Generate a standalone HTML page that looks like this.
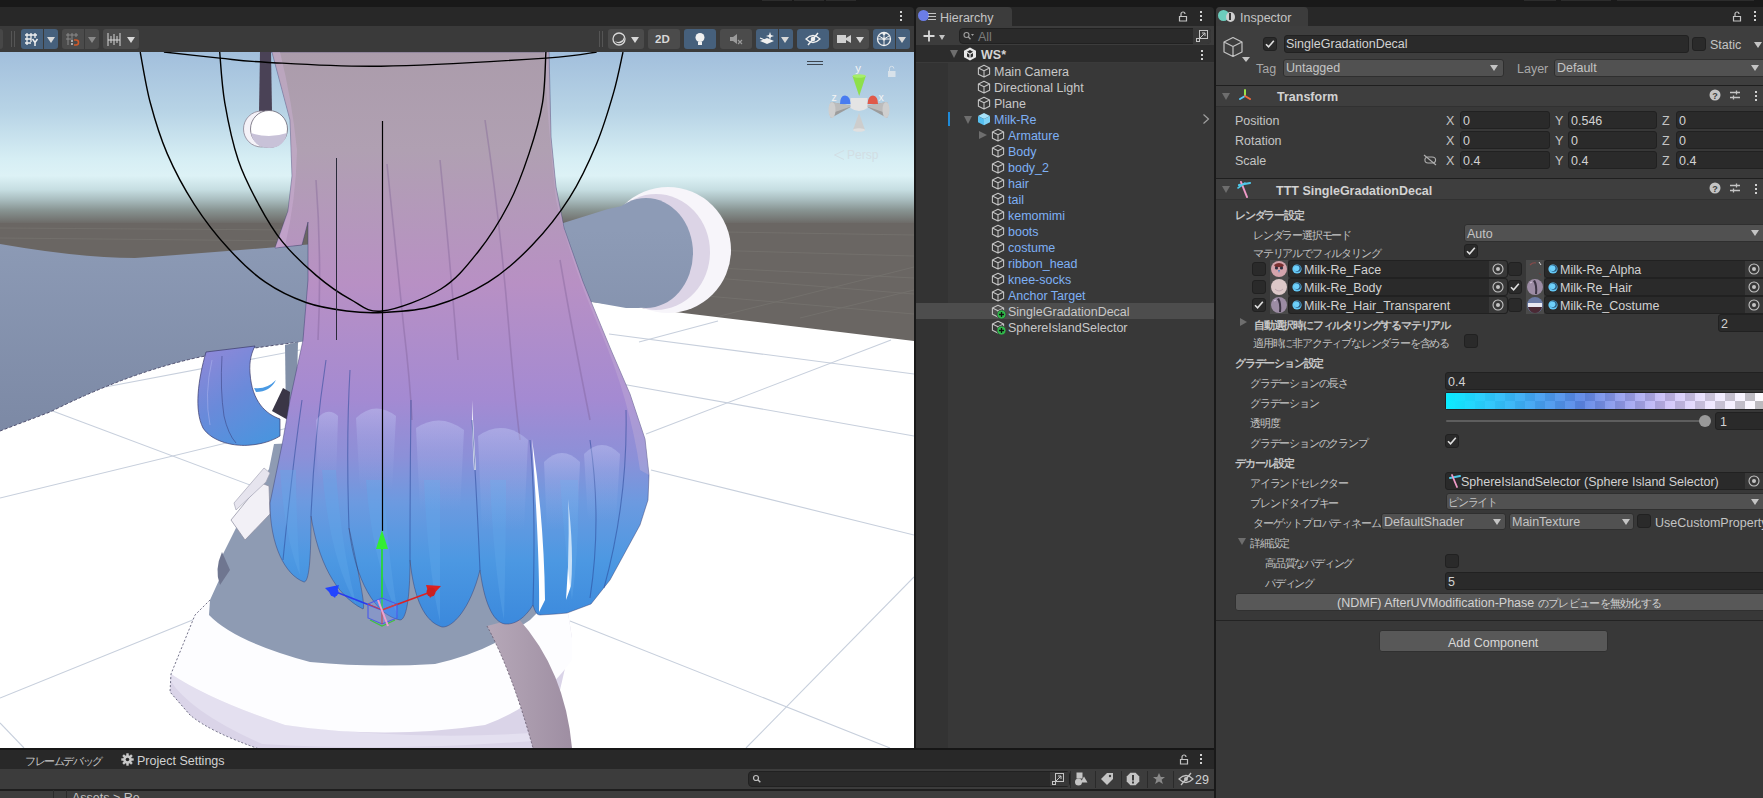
<!DOCTYPE html>
<html><head><meta charset="utf-8">
<style>
*{box-sizing:border-box;margin:0;padding:0}
html,body{width:1763px;height:798px;overflow:hidden;background:#191919;font-family:"Liberation Sans",sans-serif;font-size:12.5px;color:#c4c4c4}
.a{position:absolute}
.t{position:absolute;white-space:nowrap;line-height:16px;padding-top:1px}
.b{font-weight:bold}
.fld{position:absolute;background:#2a2a2a;border:1px solid #212121;border-radius:3px}
.dd{position:absolute;background:#515151;border:1px solid #2f2f2f;border-radius:3px}
.btn{position:absolute;background:#585858;border:1px solid #303030;border-radius:3px}
.cb{position:absolute;width:14px;height:14px;background:#2a2a2a;border:1px solid #212121;border-radius:3px}
.tri{position:absolute;width:0;height:0;border-left:4.5px solid transparent;border-right:4.5px solid transparent;border-top:6px solid #c4c4c4}
.trid{position:absolute;width:0;height:0;border-left:5px solid transparent;border-right:5px solid transparent;border-top:7px solid #6e6e6e}
.trir{position:absolute;width:0;height:0;border-top:5px solid transparent;border-bottom:5px solid transparent;border-left:7px solid #6e6e6e}
.blue{color:#7eb0f5}
.jp{font-size:10.6px;letter-spacing:-1.2px}
</style></head><body>

<!-- ===== SCENE PANEL ===== -->
<div class="a" style="left:0;top:7px;width:914px;height:19px;background:#282828;border-radius:0 4px 0 0"></div>
<div class="a" style="left:900px;top:11px;width:2px;height:2px;background:#d0d0d0;box-shadow:0 4px 0 #d0d0d0,0 8px 0 #d0d0d0"></div>
<div class="a" style="left:0;top:26px;width:914px;height:26px;background:#3a3a3a"></div>

<!-- scene toolbar -->
<div class="a" style="left:0;top:29px;width:3px;height:20px;background:#474747;border-radius:0 3px 3px 0"></div>
<div class="a" style="left:11px;top:31px;width:1px;height:16px;background:#555555"></div>
<div class="a" style="left:14px;top:31px;width:1px;height:16px;background:#555555"></div>
<div class="a" style="left:21px;top:29px;width:37px;height:20px;background:#46607c;border-radius:3px"></div>
<div class="a" style="left:43px;top:29px;width:1px;height:20px;background:#3a3a3a"></div>
<svg class="a" style="left:24px;top:31px" width="16" height="16" viewBox="0 0 16 16"><g stroke="#f0f0f0" stroke-width="1.3" fill="none"><path d="M3,2v12M7,2v9M11,2v5M1,4h12M1,8h6M1,12h6"/><path d="M8.5,8l2.5,3.5l2.5,-3.5M11,11.5v3.5" stroke-width="1.5"/></g></svg>
<div class="tri" style="left:47px;top:37px;border-top-color:#d8d8d8"></div>
<div class="a" style="left:62px;top:29px;width:37px;height:20px;background:#4b4b4b;border-radius:3px"></div>
<div class="a" style="left:84px;top:29px;width:1px;height:20px;background:#3a3a3a"></div>
<svg class="a" style="left:65px;top:31px" width="16" height="16" viewBox="0 0 16 16"><g stroke="#8a8a8a" stroke-width="1" fill="none"><path d="M3,2v12M7,2v7M11,2v4M1,4h12M1,8h5"/></g><path d="M9,9 h2 a2.5,2.5 0 0 1 0,5 h-2" stroke="#d05a2a" stroke-width="1.6" fill="none"/><rect x="6" y="9" width="2" height="2" fill="#aaa"/><rect x="6" y="12" width="2" height="2" fill="#aaa"/></svg>
<div class="tri" style="left:88px;top:37px;border-top-color:#8a8a8a"></div>
<div class="a" style="left:103px;top:29px;width:36px;height:20px;background:#4b4b4b;border-radius:3px"></div>
<svg class="a" style="left:106px;top:31px" width="16" height="16" viewBox="0 0 16 16"><g stroke="#d8d8d8" stroke-width="1" fill="none"><path d="M2,2v13M14,2v13M5,5v7M8,3v11M11,5v7M2,9h12"/></g></svg>
<div class="tri" style="left:127px;top:37px;border-top-color:#d8d8d8"></div>

<div class="a" style="left:599px;top:31px;width:1px;height:16px;background:#555555"></div>
<div class="a" style="left:602px;top:31px;width:1px;height:16px;background:#555555"></div>
<div class="a" style="left:608px;top:29px;width:36px;height:20px;background:#4b4b4b;border-radius:3px"></div>
<svg class="a" style="left:611px;top:31px" width="16" height="16" viewBox="0 0 16 16"><circle cx="8" cy="8" r="6" stroke="#d8d8d8" stroke-width="1.3" fill="none"/><path d="M4,10 a5,5 0 0 0 9,-4 a6,6 0 0 1 -9,4z" fill="#d8d8d8"/></svg>
<div class="tri" style="left:631px;top:37px;border-top-color:#d8d8d8"></div>
<div class="a" style="left:648px;top:29px;width:32px;height:20px;background:#4b4b4b;border-radius:3px"></div>
<div class="t b" style="left:655px;top:30px;font-size:11.5px;color:#d8d8d8">2D</div>
<div class="a" style="left:684px;top:29px;width:32px;height:20px;background:#46607c;border-radius:3px"></div>
<svg class="a" style="left:692px;top:31px" width="16" height="16" viewBox="0 0 16 16"><circle cx="8" cy="6.5" r="4.5" fill="#f0f0f0"/><rect x="6" y="11" width="4" height="3" fill="#f0f0f0"/></svg>
<div class="a" style="left:720px;top:29px;width:32px;height:20px;background:#4b4b4b;border-radius:3px"></div>
<svg class="a" style="left:728px;top:31px" width="16" height="16" viewBox="0 0 16 16"><path d="M2,6h3l4,-3v10l-4,-3h-3z" fill="#9a9a9a"/><path d="M10,9l4,4M14,9l-4,4" stroke="#9a9a9a" stroke-width="1.2"/></svg>
<div class="a" style="left:756px;top:29px;width:37px;height:20px;background:#46607c;border-radius:3px"></div>
<div class="a" style="left:778px;top:29px;width:1px;height:20px;background:#3a3a3a"></div>
<svg class="a" style="left:759px;top:31px" width="16" height="16" viewBox="0 0 16 16"><path d="M1,10l7,-3l7,3l-7,3z" fill="#f0f0f0"/><path d="M1,7l7,3l3,-1" stroke="#f0f0f0" stroke-width="1.2" fill="none"/><path d="M11,1l1,3l3,1l-3,1l-1,3l-1,-3l-3,-1l3,-1z" fill="#f0f0f0"/></svg>
<div class="tri" style="left:781px;top:37px;border-top-color:#d8d8d8"></div>
<div class="a" style="left:797px;top:29px;width:32px;height:20px;background:#46607c;border-radius:3px"></div>
<svg class="a" style="left:805px;top:31px" width="16" height="16" viewBox="0 0 16 16"><path d="M1,8q7,-7 14,0q-7,7 -14,0z" stroke="#f0f0f0" stroke-width="1.3" fill="none"/><circle cx="8" cy="8" r="2.3" fill="#f0f0f0"/><path d="M3,14l10,-12" stroke="#f0f0f0" stroke-width="1.4"/></svg>
<div class="a" style="left:833px;top:29px;width:36px;height:20px;background:#4b4b4b;border-radius:3px"></div>
<svg class="a" style="left:836px;top:31px" width="16" height="16" viewBox="0 0 16 16"><rect x="1" y="4" width="9" height="8" fill="#d0d0d0"/><path d="M10,7l5,-3v8l-5,-3z" fill="#d0d0d0"/></svg>
<div class="tri" style="left:856px;top:37px;border-top-color:#d8d8d8"></div>
<div class="a" style="left:873px;top:29px;width:37px;height:20px;background:#46607c;border-radius:3px"></div>
<div class="a" style="left:895px;top:29px;width:1px;height:20px;background:#3a3a3a"></div>
<svg class="a" style="left:876px;top:31px" width="16" height="16" viewBox="0 0 16 16"><circle cx="8" cy="8" r="6.5" stroke="#f0f0f0" stroke-width="1.3" fill="none"/><path d="M2,8h12M8,2v12M3,5l5,3l5,-3" stroke="#f0f0f0" stroke-width="1" fill="none"/><circle cx="8" cy="2.5" r="1.5" fill="#f0f0f0"/><circle cx="8" cy="8" r="1.5" fill="#f0f0f0"/></svg>
<div class="tri" style="left:898px;top:37px;border-top-color:#d8d8d8"></div>
<div id="scene" class="a" style="left:0;top:52px;width:914px;height:696px;overflow:hidden;background:#fff"><svg width="914" height="696" viewBox="0 52 914 696" style="position:absolute;left:0;top:0">
<defs>
<linearGradient id="sky" x1="0" y1="52" x2="0" y2="224" gradientUnits="userSpaceOnUse">
<stop offset="0" stop-color="#a2bfdc"/>
<stop offset="0.35" stop-color="#b8d4e6"/>
<stop offset="0.62" stop-color="#d6eef4"/>
<stop offset="0.72" stop-color="#ddf2f6"/>
<stop offset="0.8" stop-color="#c6dee2"/>
<stop offset="0.86" stop-color="#a8bcbe"/>
<stop offset="0.92" stop-color="#889492"/>
<stop offset="1" stop-color="#6b6865"/>
</linearGradient>
<linearGradient id="hairg" x1="0" y1="52" x2="0" y2="630" gradientUnits="userSpaceOnUse">
<stop offset="0" stop-color="#ab9cab"/>
<stop offset="0.17" stop-color="#b0a0b2"/>
<stop offset="0.4" stop-color="#b890c4"/>
<stop offset="0.6" stop-color="#a48ad2"/>
<stop offset="0.7" stop-color="#8c90d8"/>
<stop offset="0.78" stop-color="#6c9ae0"/>
<stop offset="0.88" stop-color="#4c98e2"/>
<stop offset="1" stop-color="#3a88dc"/>
</linearGradient>
<linearGradient id="armg" x1="0" y1="230" x2="0" y2="430" gradientUnits="userSpaceOnUse">
<stop offset="0" stop-color="#8d9bb6"/>
<stop offset="1" stop-color="#7c89a5"/>
</linearGradient>
<linearGradient id="rimg" x1="0" y1="600" x2="0" y2="750" gradientUnits="userSpaceOnUse">
<stop offset="0" stop-color="#ffffff"/>
<stop offset="0.55" stop-color="#f8f7fc"/>
<stop offset="1" stop-color="#dcd6ea"/>
</linearGradient>
<linearGradient id="tailg" x1="0" y1="0" x2="1" y2="0">
<stop offset="0" stop-color="#b6a8b8"/>
<stop offset="1" stop-color="#9e8ea2"/>
</linearGradient>
<linearGradient id="lockg" x1="200" y1="350" x2="260" y2="446" gradientUnits="userSpaceOnUse">
<stop offset="0" stop-color="#9088d8"/>
<stop offset="0.5" stop-color="#6a8ada"/>
<stop offset="1" stop-color="#4a94de"/>
</linearGradient>
<linearGradient id="hlg" x1="0" y1="0" x2="0" y2="1">
<stop offset="0" stop-color="#c4ccf6" stop-opacity="0.42"/>
<stop offset="0.35" stop-color="#b8c4f4" stop-opacity="0.22"/>
<stop offset="1" stop-color="#a8c0f0" stop-opacity="0"/>
</linearGradient>
</defs>
<!-- sky + ground -->
<rect x="0" y="52" width="914" height="172" fill="url(#sky)"/>
<rect x="0" y="223" width="914" height="525" fill="#6a6663"/>
<g stroke="#73706c" stroke-width="1" fill="none">
<path d="M600,230 L914,235"/><path d="M600,247 L914,256"/><path d="M600,262 L914,278"/><path d="M640,272 L914,294"/><path d="M660,292 L914,314"/>
<path d="M720,316 L914,267"/><path d="M800,318 L914,290"/><path d="M0,228 L300,230"/><path d="M0,238 L300,241"/>
</g>
<!-- floor -->
<path d="M0,330 L592,302 L914,341 L914,748 L0,748 Z" fill="#ffffff"/>
<g stroke="#c7cfdc" stroke-width="1.1" fill="none">
<path d="M609,334 L914,374"/><path d="M616,383 L914,436"/>
<path d="M639,342 L718,321"/><path d="M646,434 L891,340"/>
<path d="M651,470 L914,535"/><path d="M570,621 L890,748"/><path d="M746,748 L914,577"/>
<path d="M50,410 L330,515"/><path d="M100,388 L300,350"/><path d="M0,498 L300,425"/>
<path d="M0,698 L200,617"/><path d="M0,723 L24,748"/>
</g>
<!-- arm -->
<path d="M0,244 Q80,258 135,258 Q220,252 302,245 L560,224 L608,209 L650,200 L650,308 L626,308 L592,302 L300,342 Q250,348 200,357 Q130,372 50,412 L0,431 Z" fill="url(#armg)"/>
<path d="M0,431 L50,412 Q130,372 200,357 Q250,348 300,342" fill="none" stroke="#505070" stroke-width="1" stroke-dasharray="3,2"/>
<!-- cuff -->
<ellipse cx="668" cy="250" rx="63" ry="63" fill="#f7f5fa"/>
<ellipse cx="656" cy="252" rx="54" ry="58" fill="#dcd4e6"/>
<ellipse cx="646" cy="253" rx="47" ry="55" fill="url(#armg)"/>
<!-- skirt rim -->
<path d="M210,600 L195,615 L171,674 L170,692 L190,715 Q210,732 262,750 L545,750 L560,690 L572,638 L566,600 Z" fill="#dad4e8"/>
<path d="M170,680 Q190,712 262,744 Q400,752 545,740 L545,732 Q420,742 285,725 Q210,700 171,674 Z" fill="#e4e0f0"/>
<path d="M210,600 L195,615 L171,674 Q210,700 285,725 Q385,740 485,725 Q540,705 572,660 L572,638 L566,600 Z" fill="#fdfdff"/>
<path d="M210,600 L195,615 L171,674 L170,692 L190,715 Q210,732 262,750" fill="none" stroke="#50506a" stroke-width="0.8" stroke-dasharray="2,2"/>
<!-- skirt -->
<path d="M274,444 L269,469 L240,520 L222,556 L220,578 L210,600 L209,615 Q235,642 310,662 Q372,668 435,664 Q470,656 497,642 L530,620 L550,600 L600,560 L600,430 Z" fill="#8e9bb3"/>
<path d="M222,552 Q214,570 220,585 L230,570 Z" fill="#6f7690"/>
<!-- white flap -->
<path d="M231,520 L261,483 L269,486 L270,514 L245,540 Z" fill="#f2f0f6" stroke="#8a8a9c" stroke-width="0.7"/>
<path d="M234,503 L264,468 L270,473 L266,482 L236,510 Z" fill="#e6e4ee" stroke="#9a9aac" stroke-width="0.6"/>
<!-- tail -->
<path d="M487,626 Q512,672 533,748 L572,748 Q565,670 518,618 Z" fill="url(#tailg)"/>
<path d="M487,626 Q512,672 533,748" fill="none" stroke="#605468" stroke-width="0.8" stroke-dasharray="2,2"/>
<!-- left blue lock -->
<path d="M285,345 L298,342 L296,420 L286,418 Z" fill="#8290a8"/>
<path d="M272,411 L283,388 L290,392 L288,420 Z" fill="#3a3646"/>
<path d="M206,352 C198,380 194,410 203,428 C212,442 235,447 251,445 C262,444 272,441 280,436 L280,419 C266,414 252,402 250,373 C249,360 252,352 255,346 Z" fill="url(#lockg)" stroke="#3a3a6a" stroke-width="0.7"/>
<path d="M222,356 Q220,390 224,416 Q228,434 236,443" fill="none" stroke="#3a4080" stroke-width="0.8" opacity="0.7"/>
<path d="M212,360 Q204,395 210,425" fill="none" stroke="#b0b8f0" stroke-width="1" opacity="0.5"/>
<path d="M254,388 Q266,390 276,380 Q270,392 256,392 Z" fill="#4a9ae4"/>
<!-- main hair -->
<path d="M262,52 L272,52 L290,120 L292,176 L288,211 L275,248 L302,245 L308,222 L308,280 L303,340 L290,400 L282,445 L270,503
C270,545 285,575 304,582 C309,582 311,560 311,516 C318,560 335,595 363,609 C366,608 358,570 349,528 C355,580 375,615 400,620
C406,620 410,600 410,560 C414,600 425,622 442,627 C452,628 470,610 480,570 C484,600 492,622 505,624 C515,625 525,618 533,605
C535,612 537,615 540,615 L556,614
L567,613 L591,604 L610,580 L628,547 L640,525 L648,500 L649,475 L645,439 L630,394 L611,350 L592,304 L583,282 L564,228 L556,187 L551,137 L549,52 Z" fill="url(#hairg)" stroke="#34386a" stroke-width="0.8" stroke-opacity="0.55"/>
<!-- hair gaps (white floor) -->
<path d="M472,400 Q474,440 476,470 L474,470 Q472,440 472,400 Z" fill="#ffffff"/>
<path d="M532,439 Q544,520 545,600 L539,612 Q540,560 532,439 Z" fill="#ffffff"/>
<path d="M568,499 Q574,550 571,586 L566,600 Q570,550 568,499 Z" fill="#ffffff"/>
<!-- hair strand lines -->
<g fill="none" stroke="#7a5c92" stroke-width="1.6" opacity="0.35">
<path d="M485,120 Q500,220 509,330 Q515,400 520,440"/><path d="M387,164 Q396,250 404,330 Q410,380 412,420"/>
<path d="M316,180 Q322,260 318,340"/><path d="M440,160 Q450,260 458,360"/><path d="M560,260 Q572,330 590,420"/>
</g>
<path d="M549,52 L551,137 L556,187 L564,228 L583,282 L592,304 L611,350 L630,394 L645,439 L649,475 L640,470 Q630,400 600,330 Q570,260 556,200 Q548,130 544,52 Z" fill="#c8b4d8" opacity="0.35"/>
<path d="M272,52 L290,120 L292,176 L288,211 L275,248 L285,246 Q296,200 297,150 Q292,100 280,52 Z" fill="#d8b8e0" opacity="0.35"/>
<g fill="none" stroke="#2c4a9a" stroke-width="1.1" opacity="0.55">
<path d="M311,516 Q314,440 326,360"/><path d="M349,528 Q346,440 350,370"/>
<path d="M410,560 Q410,480 411,400"/><path d="M480,570 Q476,480 472,420"/>
<path d="M533,605 Q536,500 530,440"/><path d="M590,598 Q602,520 590,440"/>
<path d="M604,588 Q628,500 626,410"/><path d="M283,560 Q292,470 302,400"/>
</g>
<g fill="#62aaec" opacity="0.35">
<path d="M280,470 Q285,540 300,575 Q296,520 296,470 Z"/><path d="M322,470 Q330,560 356,604 Q340,540 336,470 Z"/>
<path d="M366,480 Q372,560 398,616 Q386,540 384,480 Z"/><path d="M424,480 Q428,570 440,622 Q440,540 440,480 Z"/>
<path d="M490,480 Q494,570 504,620 Q506,540 506,480 Z"/><path d="M560,480 Q566,560 572,600 Q580,540 578,480 Z"/>
</g>
<!-- highlights -->
<g fill="url(#hlg)">
<path d="M316,420 Q327,406 338,416 L336,480 L318,480 Z"/>
<path d="M356,418 Q375,400 396,416 L392,490 L360,490 Z"/>
<path d="M416,428 Q440,412 464,430 L460,510 L420,510 Z"/>
<path d="M478,436 Q503,418 528,440 L524,530 L482,530 Z"/>
<path d="M544,462 Q562,444 580,462 L577,530 L547,530 Z"/>
<path d="M584,454 Q602,436 620,454 L616,520 L588,520 Z"/>
</g>
<!-- strap top & earring -->
<path d="M260,52 L271,52 L272,112 L259,112 Z" fill="#4a4256"/>
<circle cx="261.5" cy="129" r="18" fill="#f4f2f8" stroke="#8a8494" stroke-width="0.8"/>
<circle cx="269" cy="129" r="18.5" fill="#ffffff" stroke="#6a6474" stroke-width="0.8"/>
<path d="M251,133 Q269,139 287,133 Q284,148 269,148 Q254,148 251,133 Z" fill="#c8c2d8"/>
<!-- gizmo circles -->
<g fill="none" stroke="#000" stroke-width="1.4">
<path d="M140.2,52.0 C141.9,60.5 145.8,85.9 150.3,102.8 C154.8,119.7 159.9,136.7 167.2,153.6 C174.5,170.5 184.1,188.5 194.3,204.3 C204.5,220.1 216.3,235.3 228.2,248.3 C240.0,261.3 252.4,273.2 265.4,282.2 C278.4,291.2 292.4,297.7 306.0,302.5 C319.6,307.3 333.9,309.3 346.7,311.0 C359.5,312.7 368.4,313.3 383.0,312.5 C397.6,311.7 416.6,311.1 434.2,306.0 C451.8,300.9 472.0,292.4 488.3,282.2 C504.6,272.0 518.8,259.1 532.3,245.0 C545.8,230.9 558.9,214.5 569.6,197.6 C580.3,180.7 589.4,160.9 596.7,143.4 C604.0,125.9 609.2,107.8 613.6,92.6 C618.0,77.4 621.4,58.8 623.0,52.0"/>
<path d="M219.7,52.0 C220.5,60.5 221.7,84.8 224.8,102.8 C227.9,120.8 232.7,143.4 238.3,160.3 C243.9,177.2 251.3,190.8 258.6,204.3 C265.9,217.9 272.7,229.8 282.3,241.6 C291.9,253.4 304.9,265.8 316.2,275.4 C327.5,285.0 339.0,293.2 350.0,299.1 C361.0,305.0 366.9,312.7 382.0,311.0 C397.1,309.3 424.9,298.9 440.9,289.0 C456.9,279.1 466.9,265.8 478.2,251.7 C489.5,237.6 500.1,220.7 508.6,204.3 C517.1,188.0 523.4,170.5 529.0,153.6 C534.6,136.7 539.7,119.7 542.5,102.8 C545.3,85.9 545.3,60.5 545.9,52.0"/>
<path d="M163.9,52.0 C173.2,53.0 202.8,56.4 219.7,58.1 C236.6,59.8 238.5,60.9 265.4,62.2 C292.3,63.6 334.2,66.9 381.0,66.2 C427.8,65.5 509.9,60.5 545.9,58.1 C581.9,55.7 588.2,53.0 596.7,52.0"/>
</g>
<path d="M382.5,121 L382.5,531" stroke="#000" stroke-width="1.2"/>
<path d="M336.5,158 L336.5,340" stroke="#2a2a3a" stroke-width="1"/>
<!-- transform gizmo -->
<path d="M382,610 L382,546" stroke="#22dd22" stroke-width="1.6"/>
<path d="M376,549 L382,530 L388,549 Z" fill="#33ee33"/>
<path d="M382,610 L336,592" stroke="#2a3aee" stroke-width="1.6"/>
<path d="M325,588 L339,585 L335,598 Z" fill="#2244ff"/><circle cx="334" cy="592" r="4.5" fill="#2244ff"/>
<path d="M382,610 L428,593" stroke="#dd2222" stroke-width="1.6"/>
<path d="M441,586 L426,585 L430,598 Z" fill="#dd2020"/><circle cx="431" cy="592" r="4.5" fill="#cc2020"/>
<path d="M368,604 L382,598 L397,604 L397,618 L382,624 L368,618 Z" fill="rgba(120,140,255,0.25)" stroke="#4a5ae8" stroke-width="1.1"/><path d="M368,604 L382,610 L397,604 M382,610 L382,624" fill="none" stroke="#d04040" stroke-width="1"/><path d="M370,620 L382,626 L395,620" fill="none" stroke="#40c040" stroke-width="1.2"/><path d="M378,600 L388,626" stroke="#f0a0d0" stroke-width="2"/>
<!-- nav gizmo -->
<path d="M852.5,76 L865.8,76 L859.2,96 Z" fill="#8ee04a"/>
<ellipse cx="859.2" cy="76" rx="6.6" ry="1.8" fill="#a6ee6a"/>
<path d="M831,102 Q827,110 831,118 L852.5,106 Z" fill="#9c9c9c"/>
<path d="M831,102 L852.5,106 L835,112 Z" fill="#bcbcbc"/>
<ellipse cx="832" cy="110" rx="3.5" ry="8" fill="#cfcfcf"/>
<path d="M887,102 Q891,110 887,118 L865.5,106 Z" fill="#9c9c9c"/>
<path d="M887,102 L865.5,106 L883,112 Z" fill="#bcbcbc"/>
<ellipse cx="886" cy="110" rx="3.5" ry="8" fill="#cfcfcf"/>
<path d="M853,130 L865,130 L859,113 Z" fill="#cdcdcd"/>
<ellipse cx="859" cy="130" rx="6" ry="1.8" fill="#e0e0e0"/>
<path d="M850.5,98 L867.5,98 L867.5,108 Q859,114 850.5,108 Z" fill="#e4e4e4"/>
<path d="M840,104 Q840,95.5 845,95.5 Q850.5,96 850.5,104 Z" fill="#4a7cf0"/>
<path d="M867.5,104 Q868,95.5 873,95.5 Q878,96 878,104 Z" fill="#e05a4a"/>
<text x="858" y="72" font-family="Liberation Sans" font-size="11.5" fill="#f4f4f4" text-anchor="middle">y</text>
<text x="834" y="101" font-family="Liberation Sans" font-size="10.5" fill="#f4f4f4" text-anchor="middle">z</text>
<text x="881" y="101" font-family="Liberation Sans" font-size="10.5" fill="#f4f4f4" text-anchor="middle">x</text>
<text x="847" y="158.5" font-family="Liberation Sans" font-size="12" fill="#d2dee4">Persp</text>
<path d="M844,150.5 L834.5,155 L844,159.5" fill="none" stroke="#d2dee4" stroke-width="1"/>
<path d="M807,61.5 L823,61.5 M807,64.5 L823,64.5" stroke="#3e4650" stroke-width="1"/>
<path d="M888,71 h7.5 v6 h-7.5 z" fill="#d8e2ea"/><path d="M889.5,71 v-2.5 a2.2,2.2 0 0 1 4.4,0" fill="none" stroke="#d8e2ea" stroke-width="1"/>
</svg>




















</div>

<!-- ===== HIERARCHY PANEL ===== -->
<div class="a" style="left:916px;top:7px;width:298px;height:19px;background:#282828;border-radius:4px 4px 0 0"></div>
<div class="a" style="left:916px;top:7px;width:96px;height:19px;background:#3c3c3c;border-radius:4px 4px 0 0"></div>
<div class="t" style="left:940px;top:9px">Hierarchy</div>
<div class="a" style="left:916px;top:26px;width:298px;height:19px;background:#3c3c3c"></div>
<div class="a" style="left:916px;top:45px;width:298px;height:703px;background:#383838"></div>
<div class="a" style="left:916px;top:62px;width:32px;height:686px;background:#333333"></div>
<div class="a" style="left:916px;top:45px;width:298px;height:17px;background:#2c2c2c"></div>


<!-- hierarchy header -->
<div class="a" style="left:918px;top:10px;width:11px;height:11px;border-radius:50%;background:#6b7de6"></div>
<svg class="a" style="left:927px;top:12px" width="9" height="9" viewBox="0 0 9 9"><path d="M1,1.5h8M1,4.5h8M1,7.5h8" stroke="#c4c4c4" stroke-width="1.1"/></svg>
<svg class="a" style="left:1177px;top:10px" width="12" height="12" viewBox="0 0 12 12"><path d="M2.5,6.5h7v4.5h-7z" fill="none" stroke="#c4c4c4" stroke-width="1.2"/><path d="M4,6.5v-2.5a2,2 0 0 1 4,0" fill="none" stroke="#c4c4c4" stroke-width="1.2"/></svg>
<div class="a" style="left:1200px;top:11px;width:2px;height:2px;background:#d0d0d0;box-shadow:0 4px 0 #d0d0d0,0 8px 0 #d0d0d0"></div>
<svg class="a" style="left:922px;top:29px" width="14" height="14" viewBox="0 0 14 14"><path d="M7,1.5v11M1.5,7h11" stroke="#d8d8d8" stroke-width="1.8"/></svg>
<div class="tri" style="left:939px;top:35px;border-top-color:#c4c4c4;border-left-width:3.5px;border-right-width:3.5px;border-top-width:5px"></div>
<div class="a" style="left:959px;top:28px;width:252px;height:16px;background:#2a2a2a;border:1px solid #212121;border-radius:4px"></div>
<div class="a" style="left:1193px;top:28px;width:18px;height:16px;background:#383838;border-radius:0 4px 4px 0"></div>
<svg class="a" style="left:1195px;top:29px" width="14" height="14" viewBox="0 0 14 14"><rect x="4.5" y="1.5" width="8" height="8" fill="none" stroke="#c4c4c4" stroke-width="1"/><rect x="1.5" y="9.5" width="3" height="3" fill="none" stroke="#c4c4c4" stroke-width="1"/><path d="M5,9L10,4M7,4h3v3" fill="none" stroke="#c4c4c4" stroke-width="1"/></svg>
<svg class="a" style="left:963px;top:31px" width="12" height="10" viewBox="0 0 12 10"><circle cx="3.5" cy="4" r="2.5" fill="none" stroke="#a0a0a0" stroke-width="1.1"/><path d="M5.2,5.8l2.3,2.5" stroke="#a0a0a0" stroke-width="1.3"/><path d="M8,3h3l-1.5,2z" fill="#a0a0a0"/></svg>
<div class="t" style="left:978px;top:28px;color:#7c7c7c">All</div>
<!-- scene row -->
<div class="trid" style="left:950px;top:50px;border-top-color:#6e6e6e;border-left-width:4.5px;border-right-width:4.5px;border-top-width:8px"></div>
<svg class="a" style="left:963px;top:47px" width="14" height="14" viewBox="0 0 14 14"><path d="M7,0.5 L13,3.8 L13,10.2 L7,13.5 L1,10.2 L1,3.8 Z" fill="#e8e8e8"/><path d="M7,3 L10,4.8 L7,6.6 L4,4.8 Z M4,6 L6.4,7.4 L6.4,10.8 L4,9.4 Z M10,6 L7.6,7.4 L7.6,10.8 L10,9.4 Z" fill="#2c2c2c"/></svg>
<div class="t b" style="left:981px;top:46px;color:#d4d4d4">WS*</div>
<div class="a" style="left:1201px;top:50px;width:2px;height:2px;background:#d0d0d0;box-shadow:0 4px 0 #d0d0d0,0 8px 0 #d0d0d0"></div>
<div class="a" style="left:916px;top:62px;width:298px;height:1px;background:#3a3a3a"></div>
<!-- selected row -->
<div class="a" style="left:916px;top:303px;width:298px;height:16px;background:#4d4d4d"></div>
<div class="a" style="left:948px;top:112px;width:2px;height:14px;background:#1f8ad8"></div>
<svg class="a" style="left:977px;top:64px" width="14" height="14" viewBox="0 0 14 14"><path d="M7,1.2 L12.6,4 L12.6,10.2 L7,13 L1.4,10.2 L1.4,4 Z M1.4,4 L7,6.8 L12.6,4 M7,6.8 L7,13" fill="none" stroke="#c4c4c4" stroke-width="1.1" stroke-linejoin="round"/></svg><div class="t" style="left:994px;top:63px;color:#c8c8c8">Main Camera</div><svg class="a" style="left:977px;top:80px" width="14" height="14" viewBox="0 0 14 14"><path d="M7,1.2 L12.6,4 L12.6,10.2 L7,13 L1.4,10.2 L1.4,4 Z M1.4,4 L7,6.8 L12.6,4 M7,6.8 L7,13" fill="none" stroke="#c4c4c4" stroke-width="1.1" stroke-linejoin="round"/></svg><div class="t" style="left:994px;top:79px;color:#c8c8c8">Directional Light</div><svg class="a" style="left:977px;top:96px" width="14" height="14" viewBox="0 0 14 14"><path d="M7,1.2 L12.6,4 L12.6,10.2 L7,13 L1.4,10.2 L1.4,4 Z M1.4,4 L7,6.8 L12.6,4 M7,6.8 L7,13" fill="none" stroke="#c4c4c4" stroke-width="1.1" stroke-linejoin="round"/></svg><div class="t" style="left:994px;top:95px;color:#c8c8c8">Plane</div><svg class="a" style="left:977px;top:112px" width="14" height="14" viewBox="0 0 14 14"><path d="M7,1 L13,4 L7,7 L1,4 Z" fill="#a6e2fa"/><path d="M1,4 L7,7 L7,13.2 L1,10.2 Z" fill="#56bff0"/><path d="M13,4 L7,7 L7,13.2 L13,10.2 Z" fill="#7fd2f6"/></svg><div class="trid" style="left:964px;top:116px;border-left-width:4.5px;border-right-width:4.5px;border-top-width:8px"></div><div class="t" style="left:994px;top:111px;color:#7eb0f5">Milk-Re</div><svg class="a" style="left:991px;top:128px" width="14" height="14" viewBox="0 0 14 14"><path d="M7,1.2 L12.6,4 L12.6,10.2 L7,13 L1.4,10.2 L1.4,4 Z M1.4,4 L7,6.8 L12.6,4 M7,6.8 L7,13" fill="none" stroke="#c4c4c4" stroke-width="1.1" stroke-linejoin="round"/></svg><div class="trir" style="left:979px;top:131px;border-top-width:4.5px;border-bottom-width:4.5px;border-left-width:8px"></div><div class="t" style="left:1008px;top:127px;color:#7eb0f5">Armature</div><svg class="a" style="left:991px;top:144px" width="14" height="14" viewBox="0 0 14 14"><path d="M7,1.2 L12.6,4 L12.6,10.2 L7,13 L1.4,10.2 L1.4,4 Z M1.4,4 L7,6.8 L12.6,4 M7,6.8 L7,13" fill="none" stroke="#c4c4c4" stroke-width="1.1" stroke-linejoin="round"/></svg><div class="t" style="left:1008px;top:143px;color:#7eb0f5">Body</div><svg class="a" style="left:991px;top:160px" width="14" height="14" viewBox="0 0 14 14"><path d="M7,1.2 L12.6,4 L12.6,10.2 L7,13 L1.4,10.2 L1.4,4 Z M1.4,4 L7,6.8 L12.6,4 M7,6.8 L7,13" fill="none" stroke="#c4c4c4" stroke-width="1.1" stroke-linejoin="round"/></svg><div class="t" style="left:1008px;top:159px;color:#7eb0f5">body_2</div><svg class="a" style="left:991px;top:176px" width="14" height="14" viewBox="0 0 14 14"><path d="M7,1.2 L12.6,4 L12.6,10.2 L7,13 L1.4,10.2 L1.4,4 Z M1.4,4 L7,6.8 L12.6,4 M7,6.8 L7,13" fill="none" stroke="#c4c4c4" stroke-width="1.1" stroke-linejoin="round"/></svg><div class="t" style="left:1008px;top:175px;color:#7eb0f5">hair</div><svg class="a" style="left:991px;top:192px" width="14" height="14" viewBox="0 0 14 14"><path d="M7,1.2 L12.6,4 L12.6,10.2 L7,13 L1.4,10.2 L1.4,4 Z M1.4,4 L7,6.8 L12.6,4 M7,6.8 L7,13" fill="none" stroke="#c4c4c4" stroke-width="1.1" stroke-linejoin="round"/></svg><div class="t" style="left:1008px;top:191px;color:#7eb0f5">tail</div><svg class="a" style="left:991px;top:208px" width="14" height="14" viewBox="0 0 14 14"><path d="M7,1.2 L12.6,4 L12.6,10.2 L7,13 L1.4,10.2 L1.4,4 Z M1.4,4 L7,6.8 L12.6,4 M7,6.8 L7,13" fill="none" stroke="#c4c4c4" stroke-width="1.1" stroke-linejoin="round"/></svg><div class="t" style="left:1008px;top:207px;color:#7eb0f5">kemomimi</div><svg class="a" style="left:991px;top:224px" width="14" height="14" viewBox="0 0 14 14"><path d="M7,1.2 L12.6,4 L12.6,10.2 L7,13 L1.4,10.2 L1.4,4 Z M1.4,4 L7,6.8 L12.6,4 M7,6.8 L7,13" fill="none" stroke="#c4c4c4" stroke-width="1.1" stroke-linejoin="round"/></svg><div class="t" style="left:1008px;top:223px;color:#7eb0f5">boots</div><svg class="a" style="left:991px;top:240px" width="14" height="14" viewBox="0 0 14 14"><path d="M7,1.2 L12.6,4 L12.6,10.2 L7,13 L1.4,10.2 L1.4,4 Z M1.4,4 L7,6.8 L12.6,4 M7,6.8 L7,13" fill="none" stroke="#c4c4c4" stroke-width="1.1" stroke-linejoin="round"/></svg><div class="t" style="left:1008px;top:239px;color:#7eb0f5">costume</div><svg class="a" style="left:991px;top:256px" width="14" height="14" viewBox="0 0 14 14"><path d="M7,1.2 L12.6,4 L12.6,10.2 L7,13 L1.4,10.2 L1.4,4 Z M1.4,4 L7,6.8 L12.6,4 M7,6.8 L7,13" fill="none" stroke="#c4c4c4" stroke-width="1.1" stroke-linejoin="round"/></svg><div class="t" style="left:1008px;top:255px;color:#7eb0f5">ribbon_head</div><svg class="a" style="left:991px;top:272px" width="14" height="14" viewBox="0 0 14 14"><path d="M7,1.2 L12.6,4 L12.6,10.2 L7,13 L1.4,10.2 L1.4,4 Z M1.4,4 L7,6.8 L12.6,4 M7,6.8 L7,13" fill="none" stroke="#c4c4c4" stroke-width="1.1" stroke-linejoin="round"/></svg><div class="t" style="left:1008px;top:271px;color:#7eb0f5">knee-socks</div><svg class="a" style="left:991px;top:288px" width="14" height="14" viewBox="0 0 14 14"><path d="M7,1.2 L12.6,4 L12.6,10.2 L7,13 L1.4,10.2 L1.4,4 Z M1.4,4 L7,6.8 L12.6,4 M7,6.8 L7,13" fill="none" stroke="#c4c4c4" stroke-width="1.1" stroke-linejoin="round"/></svg><div class="t" style="left:1008px;top:287px;color:#7eb0f5">Anchor Target</div><svg class="a" style="left:991px;top:304px" width="16" height="16" viewBox="0 0 16 16"><path d="M7,1.2 L12.6,4 L12.6,10.2 L7,13 L1.4,10.2 L1.4,4 Z M1.4,4 L7,6.8 L12.6,4 M7,6.8 L7,13" fill="none" stroke="#c4c4c4" stroke-width="1.1" stroke-linejoin="round"/><circle cx="10.5" cy="10.5" r="4.5" fill="#2fb84a" stroke="#383838" stroke-width="0.8"/><path d="M10.5,8v5M8,10.5h5" stroke="#111" stroke-width="1.3"/></svg><div class="t" style="left:1008px;top:303px;color:#c8c8c8">SingleGradationDecal</div><svg class="a" style="left:991px;top:320px" width="16" height="16" viewBox="0 0 16 16"><path d="M7,1.2 L12.6,4 L12.6,10.2 L7,13 L1.4,10.2 L1.4,4 Z M1.4,4 L7,6.8 L12.6,4 M7,6.8 L7,13" fill="none" stroke="#c4c4c4" stroke-width="1.1" stroke-linejoin="round"/><circle cx="10.5" cy="10.5" r="4.5" fill="#2fb84a" stroke="#383838" stroke-width="0.8"/><path d="M10.5,8v5M8,10.5h5" stroke="#111" stroke-width="1.3"/></svg><div class="t" style="left:1008px;top:319px;color:#c8c8c8">SphereIslandSelector</div><svg class="a" style="left:1202px;top:113px" width="8" height="12" viewBox="0 0 8 12"><path d="M1.5,1.5l5,4.5l-5,4.5" fill="none" stroke="#a0a0a0" stroke-width="1.2"/></svg>
<!-- ===== INSPECTOR PANEL ===== -->
<div class="a" style="left:1216px;top:7px;width:547px;height:19px;background:#282828;border-radius:4px 0 0 0"></div>
<div class="a" style="left:1216px;top:7px;width:92px;height:19px;background:#3c3c3c;border-radius:4px 4px 0 0"></div>
<div class="t" style="left:1240px;top:9px">Inspector</div>
<div class="a" style="left:1216px;top:26px;width:547px;height:772px;background:#383838"></div>
<div class="a" style="left:1216px;top:26px;width:547px;height:59px;background:#3e3e3e"></div>


<!-- inspector header -->
<div class="a" style="left:1218px;top:10px;width:11px;height:11px;border-radius:50%;background:#6ccdbd"></div>
<div class="a" style="left:1226px;top:12px;width:9px;height:10px;border-radius:50%;background:#d0d0d0"></div>
<div class="a" style="left:1229px;top:13px;width:2px;height:1.5px;background:#383838"></div>
<div class="a" style="left:1229px;top:15px;width:2px;height:5px;background:#383838"></div>
<svg class="a" style="left:1731px;top:10px" width="12" height="12" viewBox="0 0 12 12"><path d="M2.5,6.5h7v4.5h-7z" fill="none" stroke="#c4c4c4" stroke-width="1.2"/><path d="M4,6.5v-2.5a2,2 0 0 1 4,0" fill="none" stroke="#c4c4c4" stroke-width="1.2"/></svg>
<div class="a" style="left:1754px;top:11px;width:2px;height:2px;background:#d0d0d0;box-shadow:0 4px 0 #d0d0d0,0 8px 0 #d0d0d0"></div>
<svg class="a" style="left:1222px;top:36px" width="24" height="24" viewBox="0 0 24 24"><path d="M11,1.5 L20,6 L20,16 L11,20.5 L2,16 L2,6 Z M2,6 L11,10.5 L20,6 M11,10.5 L11,20.5" fill="none" stroke="#c4c4c4" stroke-width="1.2" stroke-linejoin="round"/></svg>
<div class="tri" style="left:1242px;top:57px;border-top-color:#c4c4c4;border-left-width:4px;border-right-width:4px;border-top-width:5px"></div>
<div class="cb" style="left:1263px;top:37px"></div>
<svg class="a" style="left:1265px;top:39px" width="10" height="10" viewBox="0 0 10 10"><path d="M1,5.2l2.6,2.6l5.2,-6" fill="none" stroke="#e0e0e0" stroke-width="1.6"/></svg>
<div class="fld" style="left:1284px;top:35px;width:405px;height:18px"></div>
<div class="t" style="left:1286px;top:35px;color:#d2d2d2">SingleGradationDecal</div>
<div class="cb" style="left:1692px;top:37px"></div>
<div class="t" style="left:1710px;top:36px">Static</div>
<div class="tri" style="left:1754px;top:42px;border-top-color:#c4c4c4;border-left-width:4.5px;border-right-width:4.5px"></div>
<div class="t" style="left:1256px;top:60px;color:#a8a8a8">Tag</div>
<div class="dd" style="left:1283px;top:59px;width:221px;height:18px"></div>
<div class="t" style="left:1286px;top:59px">Untagged</div>
<div class="tri" style="left:1490px;top:65px;border-top-color:#c4c4c4;border-left-width:4.5px;border-right-width:4.5px"></div>
<div class="t" style="left:1517px;top:60px;color:#a8a8a8">Layer</div>
<div class="dd" style="left:1554px;top:59px;width:215px;height:18px"></div>
<div class="t" style="left:1557px;top:59px">Default</div>
<div class="tri" style="left:1751px;top:65px;border-top-color:#c4c4c4;border-left-width:4.5px;border-right-width:4.5px"></div>
<div class="a" style="left:1216px;top:85px;width:547px;height:1px;background:#1f1f1f"></div>
<!-- transform header -->
<div class="a" style="left:1216px;top:86px;width:547px;height:20px;background:#3e3e3e"></div>
<div class="a" style="left:1216px;top:106px;width:547px;height:1px;background:#313131"></div>
<div class="trid" style="left:1222px;top:93px;border-left-width:4.5px;border-right-width:4.5px;border-top-width:7px"></div>
<svg class="a" style="left:1237px;top:88px" width="16" height="16" viewBox="0 0 16 16"><path d="M8,2v6" stroke="#9ce04a" stroke-width="2" stroke-linecap="round"/><path d="M8,8l-5,3" stroke="#5ac8f8" stroke-width="2" stroke-linecap="round"/><path d="M8,8l5,3" stroke="#f0683a" stroke-width="2" stroke-linecap="round"/></svg>
<div class="t b" style="left:1277px;top:88px;color:#d2d2d2">Transform</div>
<svg class="a" style="left:1709px;top:89px" width="12" height="12" viewBox="0 0 12 12"><circle cx="6" cy="6" r="5.5" fill="#c4c4c4"/><text x="6" y="9.5" font-family="Liberation Sans" font-weight="bold" font-size="9" text-anchor="middle" fill="#3e3e3e">?</text></svg>
<svg class="a" style="left:1729px;top:89px" width="12" height="12" viewBox="0 0 12 12"><path d="M1,3.5h10M1,8.5h10M7.5,1.5v4M4.5,6.5v4" stroke="#c4c4c4" stroke-width="1.3"/></svg>
<div class="a" style="left:1755px;top:91px;width:2px;height:2px;background:#d0d0d0;box-shadow:0 4px 0 #d0d0d0,0 8px 0 #d0d0d0"></div>
<div class="t" style="left:1235px;top:112px">Position</div><div class="t" style="left:1446px;top:112px;color:#c4c4c4">X</div><div class="fld" style="left:1460px;top:111px;width:90px;height:18px"></div><div class="t" style="left:1463px;top:112px;color:#d2d2d2">0</div><div class="t" style="left:1555px;top:112px;color:#c4c4c4">Y</div><div class="fld" style="left:1568px;top:111px;width:89px;height:18px"></div><div class="t" style="left:1571px;top:112px;color:#d2d2d2">0.546</div><div class="t" style="left:1662px;top:112px;color:#c4c4c4">Z</div><div class="fld" style="left:1676px;top:111px;width:95px;height:18px"></div><div class="t" style="left:1679px;top:112px;color:#d2d2d2">0</div><div class="t" style="left:1235px;top:132px">Rotation</div><div class="t" style="left:1446px;top:132px;color:#c4c4c4">X</div><div class="fld" style="left:1460px;top:131px;width:90px;height:18px"></div><div class="t" style="left:1463px;top:132px;color:#d2d2d2">0</div><div class="t" style="left:1555px;top:132px;color:#c4c4c4">Y</div><div class="fld" style="left:1568px;top:131px;width:89px;height:18px"></div><div class="t" style="left:1571px;top:132px;color:#d2d2d2">0</div><div class="t" style="left:1662px;top:132px;color:#c4c4c4">Z</div><div class="fld" style="left:1676px;top:131px;width:95px;height:18px"></div><div class="t" style="left:1679px;top:132px;color:#d2d2d2">0</div><div class="t" style="left:1235px;top:152px">Scale</div><div class="t" style="left:1446px;top:152px;color:#c4c4c4">X</div><div class="fld" style="left:1460px;top:151px;width:90px;height:18px"></div><div class="t" style="left:1463px;top:152px;color:#d2d2d2">0.4</div><div class="t" style="left:1555px;top:152px;color:#c4c4c4">Y</div><div class="fld" style="left:1568px;top:151px;width:89px;height:18px"></div><div class="t" style="left:1571px;top:152px;color:#d2d2d2">0.4</div><div class="t" style="left:1662px;top:152px;color:#c4c4c4">Z</div><div class="fld" style="left:1676px;top:151px;width:95px;height:18px"></div><div class="t" style="left:1679px;top:152px;color:#d2d2d2">0.4</div><svg class="a" style="left:1423px;top:154px" width="14" height="12" viewBox="0 0 14 12"><path d="M2,6a3,2.5 0 0 1 3,-3h4a3,2.5 0 0 1 0,6h-4a3,2.5 0 0 1 -3,-3z" fill="none" stroke="#b0b0b0" stroke-width="1.1"/><path d="M1,1l12,10" stroke="#b0b0b0" stroke-width="1.1"/></svg>
<div class="a" style="left:1216px;top:178px;width:547px;height:1px;background:#1f1f1f"></div>
<div class="a" style="left:1216px;top:179px;width:547px;height:20px;background:#3e3e3e"></div>
<div class="a" style="left:1216px;top:199px;width:547px;height:1px;background:#313131"></div>
<div class="trid" style="left:1222px;top:186px;border-left-width:4.5px;border-right-width:4.5px;border-top-width:7px"></div>
<svg class="a" style="left:1236px;top:181px" width="16" height="17" viewBox="0 0 16 17"><path d="M3,4l11,-2" stroke="#4fc8e8" stroke-width="2.2" stroke-linecap="round"/><path d="M5,1l6,15" stroke="#f09ac8" stroke-width="2" stroke-linecap="round"/><path d="M2,7l7,-5" stroke="#4fc8e8" stroke-width="1.6" stroke-linecap="round"/></svg>
<div class="t b" style="left:1276px;top:182px;color:#d2d2d2">TTT SingleGradationDecal</div>
<svg class="a" style="left:1709px;top:182px" width="12" height="12" viewBox="0 0 12 12"><circle cx="6" cy="6" r="5.5" fill="#c4c4c4"/><text x="6" y="9.5" font-family="Liberation Sans" font-weight="bold" font-size="9" text-anchor="middle" fill="#3e3e3e">?</text></svg>
<svg class="a" style="left:1729px;top:182px" width="12" height="12" viewBox="0 0 12 12"><path d="M1,3.5h10M1,8.5h10M7.5,1.5v4M4.5,6.5v4" stroke="#c4c4c4" stroke-width="1.3"/></svg>
<div class="a" style="left:1755px;top:184px;width:2px;height:2px;background:#d0d0d0;box-shadow:0 4px 0 #d0d0d0,0 8px 0 #d0d0d0"></div>


<!-- TTT body -->
<div class="t b" style="left:1235px;top:206px;color:#c8c8c8"><span class="jp">レンダラー設定</span></div>
<div class="t" style="left:1253px;top:226px"><span class="jp">レンダラー選択モード</span></div>
<div class="dd" style="left:1464px;top:224px;width:305px;height:18px"></div>
<div class="t" style="left:1467px;top:225px">Auto</div>
<div class="tri" style="left:1751px;top:230px;border-top-color:#c4c4c4"></div>
<div class="t" style="left:1253px;top:244px"><span class="jp">マテリアルでフィルタリング</span></div>
<div class="cb" style="left:1464px;top:244px"></div><svg class="a" style="left:1466px;top:246px" width="10" height="10" viewBox="0 0 10 10"><path d="M1,5.2l2.6,2.6l5.2,-6" fill="none" stroke="#e0e0e0" stroke-width="1.6"/></svg><div class="cb" style="left:1252px;top:262px"></div><div class="a" style="left:1270px;top:260px;width:18px;height:18px;background:#4a4a4a"></div><svg class="a" style="left:1271px;top:261px" width="16" height="16" viewBox="0 0 16 16"><circle cx="8" cy="8" r="8" fill="#d4a4ac"/><path d="M3,4 Q8,0 13,4 L11,7 Q8,5 5,7 Z" fill="#7a3030"/><circle cx="5.5" cy="7" r="1.6" fill="#303040"/><circle cx="10.5" cy="7" r="1.6" fill="#303040"/><path d="M7,9 L8,12 L9,9 Z" fill="#4a80c0"/></svg><div class="fld" style="left:1288px;top:260px;width:220px;height:18px;border-radius:3px"></div><div class="a" style="left:1489px;top:261px;width:18px;height:16px;background:#383838;border-radius:0 3px 3px 0"></div><svg class="a" style="left:1492px;top:263px" width="12" height="12" viewBox="0 0 12 12"><circle cx="6" cy="6" r="5" fill="none" stroke="#c4c4c4" stroke-width="1.1"/><circle cx="6" cy="6" r="2" fill="#c4c4c4"/></svg><svg class="a" style="left:1292px;top:264px" width="10" height="10" viewBox="0 0 10 10"><circle cx="5" cy="5" r="4.6" fill="#64c8f6"/><circle cx="5.6" cy="4.4" r="3.3" fill="#2a5a80"/><circle cx="4.6" cy="4.2" r="2.8" fill="#6ed0fa"/></svg><div class="t" style="left:1304px;top:261px;color:#d2d2d2">Milk-Re_Face</div><div class="cb" style="left:1508px;top:262px"></div><div class="a" style="left:1526px;top:260px;width:18px;height:18px;background:#4a4a4a"></div><svg class="a" style="left:1527px;top:261px" width="16" height="16" viewBox="0 0 16 16"><path d="M3,4 Q6,1 9,2" stroke="#8a4a4a" stroke-width="1.2" fill="none"/><path d="M12,1 L14,4" stroke="#d8d8d8" stroke-width="1"/><path d="M12,12 L14,14" stroke="#6a3a3a" stroke-width="1"/></svg><div class="fld" style="left:1544px;top:260px;width:225px;height:18px"></div><div class="a" style="left:1745px;top:261px;width:18px;height:16px;background:#383838"></div><svg class="a" style="left:1748px;top:263px" width="12" height="12" viewBox="0 0 12 12"><circle cx="6" cy="6" r="5" fill="none" stroke="#c4c4c4" stroke-width="1.1"/><circle cx="6" cy="6" r="2" fill="#c4c4c4"/></svg><svg class="a" style="left:1548px;top:264px" width="10" height="10" viewBox="0 0 10 10"><circle cx="5" cy="5" r="4.6" fill="#64c8f6"/><circle cx="5.6" cy="4.4" r="3.3" fill="#2a5a80"/><circle cx="4.6" cy="4.2" r="2.8" fill="#6ed0fa"/></svg><div class="t" style="left:1560px;top:261px;color:#d2d2d2">Milk-Re_Alpha</div><div class="cb" style="left:1252px;top:280px"></div><div class="a" style="left:1270px;top:278px;width:18px;height:18px;background:#4a4a4a"></div><svg class="a" style="left:1271px;top:279px" width="16" height="16" viewBox="0 0 16 16"><circle cx="8" cy="8" r="8" fill="#dcc8c8"/><path d="M4,10 Q8,14 12,10" stroke="#c0a8b0" fill="none"/></svg><div class="fld" style="left:1288px;top:278px;width:220px;height:18px;border-radius:3px"></div><div class="a" style="left:1489px;top:279px;width:18px;height:16px;background:#383838;border-radius:0 3px 3px 0"></div><svg class="a" style="left:1492px;top:281px" width="12" height="12" viewBox="0 0 12 12"><circle cx="6" cy="6" r="5" fill="none" stroke="#c4c4c4" stroke-width="1.1"/><circle cx="6" cy="6" r="2" fill="#c4c4c4"/></svg><svg class="a" style="left:1292px;top:282px" width="10" height="10" viewBox="0 0 10 10"><circle cx="5" cy="5" r="4.6" fill="#64c8f6"/><circle cx="5.6" cy="4.4" r="3.3" fill="#2a5a80"/><circle cx="4.6" cy="4.2" r="2.8" fill="#6ed0fa"/></svg><div class="t" style="left:1304px;top:279px;color:#d2d2d2">Milk-Re_Body</div><div class="cb" style="left:1508px;top:280px"></div><svg class="a" style="left:1510px;top:282px" width="10" height="10" viewBox="0 0 10 10"><path d="M1,5.2l2.6,2.6l5.2,-6" fill="none" stroke="#e0e0e0" stroke-width="1.6"/></svg><div class="a" style="left:1526px;top:278px;width:18px;height:18px;background:#4a4a4a"></div><svg class="a" style="left:1527px;top:279px" width="16" height="16" viewBox="0 0 16 16"><circle cx="8" cy="8" r="8" fill="#9c8ca4"/><path d="M6,2 Q9,6 8,15 L10,15 Q11,6 8,1 Z" fill="#3c3444"/><path d="M3,4 L5,3" stroke="#d0c0d8" stroke-width="1.2"/></svg><div class="fld" style="left:1544px;top:278px;width:225px;height:18px"></div><div class="a" style="left:1745px;top:279px;width:18px;height:16px;background:#383838"></div><svg class="a" style="left:1748px;top:281px" width="12" height="12" viewBox="0 0 12 12"><circle cx="6" cy="6" r="5" fill="none" stroke="#c4c4c4" stroke-width="1.1"/><circle cx="6" cy="6" r="2" fill="#c4c4c4"/></svg><svg class="a" style="left:1548px;top:282px" width="10" height="10" viewBox="0 0 10 10"><circle cx="5" cy="5" r="4.6" fill="#64c8f6"/><circle cx="5.6" cy="4.4" r="3.3" fill="#2a5a80"/><circle cx="4.6" cy="4.2" r="2.8" fill="#6ed0fa"/></svg><div class="t" style="left:1560px;top:279px;color:#d2d2d2">Milk-Re_Hair</div><div class="cb" style="left:1252px;top:298px"></div><svg class="a" style="left:1254px;top:300px" width="10" height="10" viewBox="0 0 10 10"><path d="M1,5.2l2.6,2.6l5.2,-6" fill="none" stroke="#e0e0e0" stroke-width="1.6"/></svg><div class="a" style="left:1270px;top:296px;width:18px;height:18px;background:#4a4a4a"></div><svg class="a" style="left:1271px;top:297px" width="16" height="16" viewBox="0 0 16 16"><circle cx="8" cy="8" r="8" fill="#9c8ca4"/><path d="M6,2 Q9,6 8,15 L10,15 Q11,6 8,1 Z" fill="#3c3444"/><path d="M3,4 L5,3" stroke="#d0c0d8" stroke-width="1.2"/></svg><div class="fld" style="left:1288px;top:296px;width:220px;height:18px;border-radius:3px"></div><div class="a" style="left:1489px;top:297px;width:18px;height:16px;background:#383838;border-radius:0 3px 3px 0"></div><svg class="a" style="left:1492px;top:299px" width="12" height="12" viewBox="0 0 12 12"><circle cx="6" cy="6" r="5" fill="none" stroke="#c4c4c4" stroke-width="1.1"/><circle cx="6" cy="6" r="2" fill="#c4c4c4"/></svg><svg class="a" style="left:1292px;top:300px" width="10" height="10" viewBox="0 0 10 10"><circle cx="5" cy="5" r="4.6" fill="#64c8f6"/><circle cx="5.6" cy="4.4" r="3.3" fill="#2a5a80"/><circle cx="4.6" cy="4.2" r="2.8" fill="#6ed0fa"/></svg><div class="t" style="left:1304px;top:297px;color:#d2d2d2">Milk-Re_Hair_Transparent</div><div class="cb" style="left:1508px;top:298px"></div><div class="a" style="left:1526px;top:296px;width:18px;height:18px;background:#4a4a4a"></div><svg class="a" style="left:1527px;top:297px" width="16" height="16" viewBox="0 0 16 16"><circle cx="8" cy="8" r="8" fill="#6a7aa4"/><rect x="1" y="6" width="14" height="4" fill="#e8e8f0"/><path d="M1,10 L15,10 Q13,16 8,16 Q3,16 1,10 Z" fill="#4a2a34"/></svg><div class="fld" style="left:1544px;top:296px;width:225px;height:18px"></div><div class="a" style="left:1745px;top:297px;width:18px;height:16px;background:#383838"></div><svg class="a" style="left:1748px;top:299px" width="12" height="12" viewBox="0 0 12 12"><circle cx="6" cy="6" r="5" fill="none" stroke="#c4c4c4" stroke-width="1.1"/><circle cx="6" cy="6" r="2" fill="#c4c4c4"/></svg><svg class="a" style="left:1548px;top:300px" width="10" height="10" viewBox="0 0 10 10"><circle cx="5" cy="5" r="4.6" fill="#64c8f6"/><circle cx="5.6" cy="4.4" r="3.3" fill="#2a5a80"/><circle cx="4.6" cy="4.2" r="2.8" fill="#6ed0fa"/></svg><div class="t" style="left:1560px;top:297px;color:#d2d2d2">Milk-Re_Costume</div>
<div class="trir" style="left:1240px;top:318px;border-top-width:4.5px;border-bottom-width:4.5px;border-left-width:7px"></div>
<div class="t b" style="left:1254px;top:316px;color:#c8c8c8"><span class="jp">自動選択時にフィルタリングするマテリアル</span></div>
<div class="fld" style="left:1718px;top:314px;width:51px;height:18px"></div>
<div class="t" style="left:1721px;top:315px;color:#d2d2d2">2</div>
<div class="t" style="left:1253px;top:334px"><span class="jp">適用時に非アクティブなレンダラーを含める</span></div>
<div class="cb" style="left:1464px;top:334px"></div>
<div class="t b" style="left:1235px;top:354px;color:#c8c8c8"><span class="jp">グラデーション設定</span></div>
<div class="t" style="left:1250px;top:374px"><span class="jp">グラデーションの長さ</span></div>
<div class="fld" style="left:1445px;top:372px;width:324px;height:18px"></div>
<div class="t" style="left:1448px;top:373px;color:#d2d2d2">0.4</div>
<div class="t" style="left:1250px;top:394px"><span class="jp">グラデーション</span></div>
<div class="a" style="left:1445px;top:392px;width:324px;height:18px;border:1px solid #232323;border-radius:2px;overflow:hidden">
<div class="a" style="left:0;top:0;width:324px;height:16px;background:conic-gradient(#ffffff 25%,#b2b2b2 0 50%,#ffffff 0 75%,#b2b2b2 0) -1px 0/20px 16px"></div>
<div class="a" style="left:0;top:0;width:324px;height:16px;background:linear-gradient(90deg,rgba(10,236,255,1) 0%,rgba(30,200,252,0.92) 12%,rgba(45,150,240,0.85) 28%,rgba(60,110,225,0.78) 42%,rgba(120,130,235,0.7) 55%,rgba(180,160,245,0.6) 68%,rgba(225,210,255,0.5) 82%,rgba(255,250,255,0.1) 100%)"></div>
</div>
<div class="t" style="left:1250px;top:414px"><span class="jp">透明度</span></div>
<div class="a" style="left:1446px;top:420px;width:262px;height:2px;background:#5e5e5e;border-radius:1px"></div>
<div class="a" style="left:1699px;top:415px;width:12px;height:12px;border-radius:50%;background:#999"></div>
<div class="fld" style="left:1715px;top:412px;width:54px;height:18px"></div>
<div class="t" style="left:1720px;top:413px;color:#d2d2d2">1</div>
<div class="t" style="left:1250px;top:434px"><span class="jp">グラデーションのクランプ</span></div>
<div class="cb" style="left:1445px;top:434px"></div><svg class="a" style="left:1447px;top:436px" width="10" height="10" viewBox="0 0 10 10"><path d="M1,5.2l2.6,2.6l5.2,-6" fill="none" stroke="#e0e0e0" stroke-width="1.6"/></svg>
<div class="t b" style="left:1235px;top:454px;color:#c8c8c8"><span class="jp">デカール設定</span></div>
<div class="t" style="left:1250px;top:474px"><span class="jp">アイランドセレクター</span></div>
<div class="fld" style="left:1445px;top:472px;width:324px;height:18px"></div>
<svg class="a" style="left:1448px;top:474px" width="13" height="14" viewBox="0 0 13 14"><path d="M2,4l10,-2" stroke="#4fc8e8" stroke-width="2" stroke-linecap="round"/><path d="M4,1l5,12" stroke="#f09ac8" stroke-width="1.8" stroke-linecap="round"/></svg>
<div class="t" style="left:1461px;top:473px;color:#d2d2d2">SphereIslandSelector (Sphere Island Selector)</div>
<div class="a" style="left:1745px;top:473px;width:18px;height:16px;background:#383838"></div>
<svg class="a" style="left:1748px;top:475px" width="12" height="12" viewBox="0 0 12 12"><circle cx="6" cy="6" r="5" fill="none" stroke="#c4c4c4" stroke-width="1.1"/><circle cx="6" cy="6" r="2" fill="#c4c4c4"/></svg>
<div class="t" style="left:1250px;top:494px"><span class="jp">ブレンドタイプキー</span></div>
<div class="dd" style="left:1446px;top:493px;width:323px;height:17px"></div>
<div class="t" style="left:1448px;top:493px"><span class="jp">ピンライト</span></div>
<div class="tri" style="left:1751px;top:499px;border-top-color:#c4c4c4"></div>
<div class="t" style="left:1253px;top:514px"><span class="jp">ターゲットプロパティネーム</span></div>
<div class="dd" style="left:1381px;top:513px;width:125px;height:17px"></div>
<div class="t" style="left:1384px;top:513px">DefaultShader</div>
<div class="tri" style="left:1493px;top:519px;border-top-color:#c4c4c4"></div>
<div class="dd" style="left:1509px;top:513px;width:125px;height:17px"></div>
<div class="t" style="left:1512px;top:513px">MainTexture</div>
<div class="tri" style="left:1622px;top:519px;border-top-color:#c4c4c4"></div>
<div class="cb" style="left:1637px;top:514px"></div>
<div class="t" style="left:1655px;top:514px">UseCustomProperty</div>
<div class="trid" style="left:1238px;top:538px;border-left-width:4.5px;border-right-width:4.5px;border-top-width:7px"></div>
<div class="t" style="left:1250px;top:534px"><span class="jp">詳細設定</span></div>
<div class="t" style="left:1265px;top:554px"><span class="jp">高品質なパディング</span></div>
<div class="cb" style="left:1445px;top:554px"></div>
<div class="t" style="left:1265px;top:574px"><span class="jp">パディング</span></div>
<div class="fld" style="left:1445px;top:572px;width:324px;height:18px"></div>
<div class="t" style="left:1448px;top:573px;color:#d2d2d2">5</div>
<div class="btn" style="left:1235px;top:593px;width:534px;height:18px;background:#585858"></div>
<div class="t" style="left:1337px;top:594px;color:#d2d2d2">(NDMF) AfterUVModification-Phase <span class="jp" style="letter-spacing:-0.7px">のプレビューを無効化する</span></div>
<div class="a" style="left:1216px;top:620px;width:547px;height:1px;background:#232323"></div>
<div class="btn" style="left:1379px;top:630px;width:229px;height:22px;background:#585858"></div>
<div class="t" style="left:1448px;top:634px;color:#d8d8d8">Add Component</div>

<!-- ===== BOTTOM PANEL ===== -->
<div class="a" style="left:0;top:749px;width:1214px;height:20px;background:#282828"></div>
<div class="a" style="left:0;top:769px;width:1214px;height:20px;background:#3c3c3c"></div>
<div class="a" style="left:0;top:789px;width:1214px;height:9px;background:#3d3d3d;border-top:2px solid #1e1e1e"></div>


<div class="a" style="left:0;top:748px;width:1214px;height:2px;background:#161616"></div><div class="a" style="left:762px;top:0;width:30px;height:1px;background:#2c2c2c"></div><div class="a" style="left:794px;top:0;width:30px;height:1px;background:#2c2c2c"></div><div class="a" style="left:826px;top:0;width:30px;height:1px;background:#2c2c2c"></div><div class="a" style="left:1524px;top:0;width:32px;height:1px;background:#2c2c2c"></div><div class="a" style="left:1561px;top:0;width:50px;height:1px;background:#2c2c2c"></div><div class="a" style="left:1617px;top:0;width:137px;height:1px;background:#2c2c2c"></div>
<div class="t" style="left:25px;top:752px;color:#c8c8c8"><span class="jp" style="font-size:11px;letter-spacing:-1.4px">フレームデバッグ</span></div>
<svg class="a" style="left:121px;top:753px" width="13" height="13" viewBox="0 0 13 13"><g fill="#c8c8c8"><circle cx="6.5" cy="6.5" r="4.3"/><rect x="5.3" y="0.3" width="2.4" height="12.4"/><rect x="0.3" y="5.3" width="12.4" height="2.4"/><rect x="5.3" y="0.3" width="2.4" height="12.4" transform="rotate(45 6.5 6.5)"/><rect x="5.3" y="0.3" width="2.4" height="12.4" transform="rotate(-45 6.5 6.5)"/></g><circle cx="6.5" cy="6.5" r="1.8" fill="#282828"/></svg>
<div class="t" style="left:137px;top:752px;color:#d2d2d2">Project Settings</div>
<svg class="a" style="left:1178px;top:753px" width="12" height="12" viewBox="0 0 12 12"><path d="M2.5,6.5h7v4.5h-7z" fill="none" stroke="#c4c4c4" stroke-width="1.2"/><path d="M4,6.5v-2.5a2,2 0 0 1 4,0" fill="none" stroke="#c4c4c4" stroke-width="1.2"/></svg>
<div class="a" style="left:1200px;top:754px;width:2px;height:2px;background:#d0d0d0;box-shadow:0 4px 0 #d0d0d0,0 8px 0 #d0d0d0"></div>
<div class="a" style="left:748px;top:771px;width:322px;height:16px;background:#2a2a2a;border:1px solid #212121;border-radius:4px"></div>
<svg class="a" style="left:752px;top:774px" width="10" height="10" viewBox="0 0 10 10"><circle cx="4" cy="4" r="2.5" fill="none" stroke="#c0c0c0" stroke-width="1.2"/><path d="M5.8,5.8l2.5,2.5" stroke="#c0c0c0" stroke-width="1.4"/></svg>
<div class="a" style="left:1050px;top:772px;width:19px;height:14px;background:#383838"></div>
<svg class="a" style="left:1051px;top:772px" width="14" height="14" viewBox="0 0 14 14"><rect x="4.5" y="1.5" width="8" height="8" fill="none" stroke="#c4c4c4" stroke-width="1"/><rect x="1.5" y="9.5" width="3" height="3" fill="none" stroke="#c4c4c4" stroke-width="1"/><path d="M5,9L10,4M7,4h3v3" fill="none" stroke="#c4c4c4" stroke-width="1"/></svg>
<div class="a" style="left:1070px;top:771px;width:1px;height:17px;background:#2a2a2a"></div>
<svg class="a" style="left:1075px;top:772px" width="14" height="14" viewBox="0 0 14 14"><rect x="1.5" y="0.5" width="6" height="6" fill="#c4c4c4"/><circle cx="3.5" cy="10" r="3.5" fill="#c4c4c4"/><path d="M9,4.5l3.5,6h-7z" fill="#c4c4c4"/></svg>
<div class="a" style="left:1095px;top:771px;width:1px;height:17px;background:#2a2a2a"></div>
<svg class="a" style="left:1100px;top:772px" width="14" height="14" viewBox="0 0 14 14"><path d="M1,7l6,-6h6v6l-6,6z" fill="#c4c4c4"/><circle cx="10" cy="4" r="1.2" fill="#3c3c3c"/></svg>
<div class="a" style="left:1121px;top:771px;width:1px;height:17px;background:#2a2a2a"></div>
<svg class="a" style="left:1126px;top:772px" width="14" height="14" viewBox="0 0 14 14"><path d="M4.4,0.7h5.2l3.7,3.7v5.2l-3.7,3.7h-5.2l-3.7,-3.7v-5.2z" fill="#c4c4c4"/><rect x="6" y="3" width="2" height="5.5" fill="#3c3c3c"/><rect x="6" y="9.5" width="2" height="2" fill="#3c3c3c"/></svg>
<div class="a" style="left:1147px;top:771px;width:1px;height:17px;background:#2a2a2a"></div>
<svg class="a" style="left:1152px;top:772px" width="14" height="14" viewBox="0 0 14 14"><path d="M7,1l1.8,4h4.2l-3.4,2.7l1.3,4.3l-3.9,-2.6l-3.9,2.6l1.3,-4.3l-3.4,-2.7h4.2z" fill="#8a8a8a"/></svg>
<div class="a" style="left:1173px;top:771px;width:1px;height:17px;background:#2a2a2a"></div>
<svg class="a" style="left:1178px;top:772px" width="16" height="14" viewBox="0 0 16 14"><path d="M1,7q7,-7 14,0q-7,7 -14,0z" stroke="#c4c4c4" stroke-width="1.2" fill="none"/><circle cx="8" cy="7" r="2" fill="#c4c4c4"/><path d="M3,13l10,-12" stroke="#c4c4c4" stroke-width="1.3"/></svg>
<div class="t" style="left:1195px;top:771px;color:#d2d2d2">29</div>
<div class="a" style="left:53px;top:790px;width:1px;height:8px;background:#2a2a2a"></div>
<div class="a" style="left:66px;top:790px;width:1px;height:8px;background:#2a2a2a"></div>
<div class="t" style="left:72px;top:789px;color:#c4c4c4">Assets &gt; Re</div>

</body></html>
